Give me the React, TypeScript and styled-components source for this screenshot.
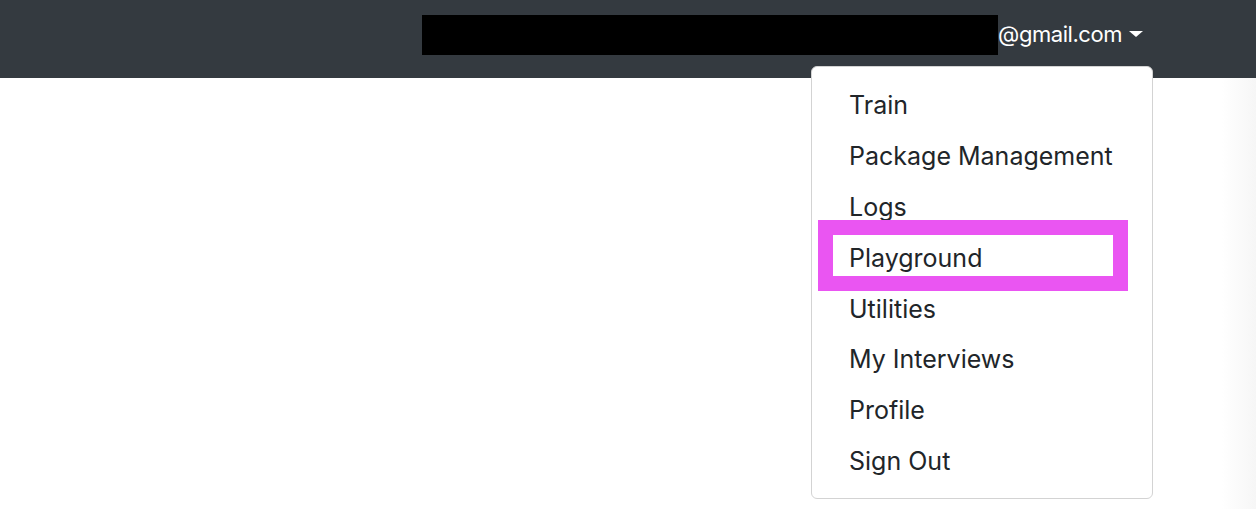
import React from "react";
import styled, { createGlobalStyle } from "styled-components";

const Global = createGlobalStyle`
  html, body { margin: 0; padding: 0; }
  body {
    width: 1256px;
    height: 509px;
    overflow: hidden;
    font-family: Inter, "Noto Sans", "Liberation Sans", sans-serif;
    color: #212529;
    background: #fff;
  }
`;

const Page = styled.div`
  position: relative;
  width: 1256px;
  height: 509px;
  display: flex;
  flex-direction: column;
`;

const Navbar = styled.nav`
  height: 78px;
  flex: none;
  background: #343a40;
  display: flex;
  align-items: center;
  justify-content: flex-end;
  padding-right: 113px;
`;

const Redacted = styled.span`
  display: block;
  width: 576px;
  height: 40px;
  margin-top: -8px;
  background: #000;
`;

const UserToggle = styled.a`
  display: flex;
  align-items: center;
  color: #fff;
  font-size: 22px;
  letter-spacing: -0.45px;
  line-height: 38px;
  text-decoration: none;
  margin-top: -10px;
`;

const Caret = styled.span`
  display: inline-block;
  margin-left: 7px;
  margin-top: -1px;
  width: 0;
  height: 0;
  border-top: 6px solid #fff;
  border-left: 7.5px solid transparent;
  border-right: 7.5px solid transparent;
`;

const Body = styled.main`
  flex: 1;
  background: linear-gradient(to right, #fff 0, #fff 1222px, #f6f6f6 1256px);
`;

const Menu = styled.ul`
  position: absolute;
  left: 811px;
  top: 66px;
  width: 342px;
  box-sizing: border-box;
  margin: 0;
  padding: 12.5px 0 11.5px;
  list-style: none;
  background: #fff;
  border: 1px solid #d3d3d3;
  border-radius: 6px;
`;

const Item = styled.li<{ $marked?: boolean }>`
  position: relative;
  height: 50.9px;
  display: flex;
  align-items: center;
  padding: 0 37px;
  font-size: 25px;
  color: #212529;
  white-space: nowrap;

  ${(p) =>
    p.$marked &&
    `
    &::after {
      content: "";
      position: absolute;
      left: 6px;
      right: 24px;
      top: -12px;
      bottom: -8px;
      box-sizing: border-box;
      border: 15px solid #ea55f2;
      pointer-events: none;
    }
  `}
`;

const items = [
  "Train",
  "Package Management",
  "Logs",
  "Playground",
  "Utilities",
  "My Interviews",
  "Profile",
  "Sign Out",
];

export default function App() {
  return (
    <>
      <Global />
      <Page>
        <Navbar>
          <Redacted />
          <UserToggle>
            @gmail.com
            <Caret />
          </UserToggle>
        </Navbar>
        <Body />
        <Menu>
          {items.map((t) => (
            <Item key={t} $marked={t === "Playground"}>
              {t}
            </Item>
          ))}
        </Menu>
      </Page>
    </>
  );
}
